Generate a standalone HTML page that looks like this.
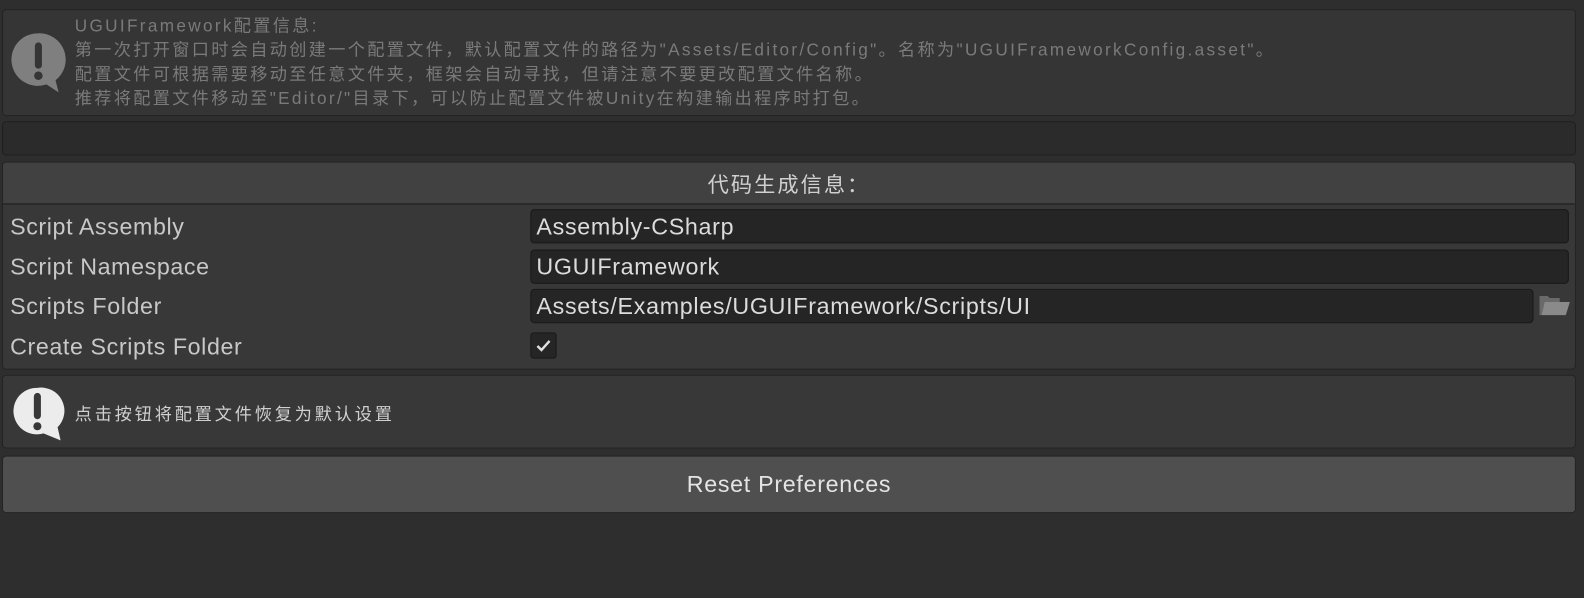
<!DOCTYPE html>
<html><head><meta charset="utf-8"><style>
body{margin:0;width:1584px;height:598px;background:#2e2e2e;font-family:"Liberation Sans","Noto Sans CJK SC",sans-serif;overflow:hidden}
#w{position:absolute;left:0;top:0;width:1568px;height:592px;transform:scale(1.0102,1.0101);transform-origin:0 0}
.b{position:absolute;box-sizing:border-box;border:1px solid #232323;border-radius:4px}
.t{position:absolute;white-space:nowrap}
.f{position:absolute;left:525px;height:34px;box-sizing:border-box;background:#252525;border:1px solid #181818;border-radius:4px;color:#dcdcdc;font-size:23px;line-height:33px;padding-left:5px;letter-spacing:0.7px}
.l{position:absolute;left:10px;color:#c8c8c8;font-size:23px;letter-spacing:0.6px}
</style></head><body><div id="w">
<div class="b" style="left:2px;top:9px;width:1558px;height:106px;background:#353535"></div>
<svg style="position:absolute;left:10px;top:30px" width="58" height="62" viewBox="0 0 58 62"><path d="M28 3a26 26 0 1 0 8 50.5l12 8 -3-12A26 26 0 0 0 28 3z" fill="#7f7f7f"/><rect x="24.5" y="12" width="7" height="26" rx="3.5" fill="#353535"/><circle cx="28" cy="45" r="4.2" fill="#353535"/></svg>
<div class="t" style="left:74px;top:14px;font-size:17px;line-height:24px;color:#7a7a7a;letter-spacing:2.3px">UGUIFramework配置信息:<br>第一次打开窗口时会自动创建一个配置文件，默认配置文件的路径为"Assets/Editor/Config"。名称为"UGUIFrameworkConfig.asset"。<br>配置文件可根据需要移动至任意文件夹，框架会自动寻找，但请注意不要更改配置文件名称。<br>推荐将配置文件移动至"Editor/"目录下，可以防止配置文件被Unity在构建输出程序时打包。</div>
<div class="b" style="left:2px;top:120px;width:1558px;height:34px;background:#2b2b2b;border-color:#1f1f1f"></div>
<div class="b" style="left:2px;top:160px;width:1558px;height:206px;background:#383838"></div>
<div style="position:absolute;left:3px;top:161px;width:1556px;height:40px;background:#414141;border-bottom:2px solid #2a2a2a;border-radius:3px 3px 0 0"></div>
<div class="t" style="left:0;width:1562px;text-align:center;top:167px;font-size:21px;color:#d0d0d0;letter-spacing:2px">代码生成信息：</div>
<div class="l" style="top:211px">Script Assembly</div>
<div class="l" style="top:251px">Script Namespace</div>
<div class="l" style="top:290px">Scripts Folder</div>
<div class="l" style="top:330px">Create Scripts Folder</div>
<div class="f" style="top:207px;width:1028px">Assembly-CSharp</div>
<div class="f" style="top:247px;width:1028px">UGUIFramework</div>
<div class="f" style="top:286px;width:993px">Assets/Examples/UGUIFramework/Scripts/UI</div>
<svg style="position:absolute;left:1523px;top:292px" width="32" height="22" viewBox="0 0 32 22"><path d="M1 1h8l2 2h10v4H6L3 20H1z" fill="#6a6a6a"/><path d="M6 7h25l-4 13H3z" fill="#8a8a8a"/></svg>
<div style="position:absolute;left:525px;top:329px;width:26px;height:26px;box-sizing:border-box;background:#252525;border:1px solid #181818;border-radius:3px"></div>
<svg style="position:absolute;left:525px;top:329px" width="26" height="26"><path d="M7 13.5l4 4 8-9" stroke="#e0e0e0" stroke-width="2.4" fill="none"/></svg>
<div class="b" style="left:2px;top:371px;width:1558px;height:73px;background:#383838"></div>
<svg style="position:absolute;left:10px;top:383px" width="58" height="56" viewBox="0 0 58 56"><path d="M27 1a23 23 0 1 0 6 45l17 7 -3-13A23 23 0 0 0 27 1z" fill="#ececec"/><rect x="23.5" y="6" width="7" height="26" rx="3.5" fill="#383838"/><circle cx="27" cy="39" r="4" fill="#383838"/></svg>
<div class="t" style="left:74px;top:396px;font-size:17px;color:#d0d0d0;letter-spacing:2.8px">点击按钮将配置文件恢复为默认设置</div>
<div class="b" style="left:2px;top:451px;width:1558px;height:57px;background:#4f4f4f;border-color:#242424"></div>
<div class="t" style="left:0;width:1562px;text-align:center;top:466px;font-size:23px;color:#e4e4e4;letter-spacing:0.7px">Reset Preferences</div>
</div></body></html>
